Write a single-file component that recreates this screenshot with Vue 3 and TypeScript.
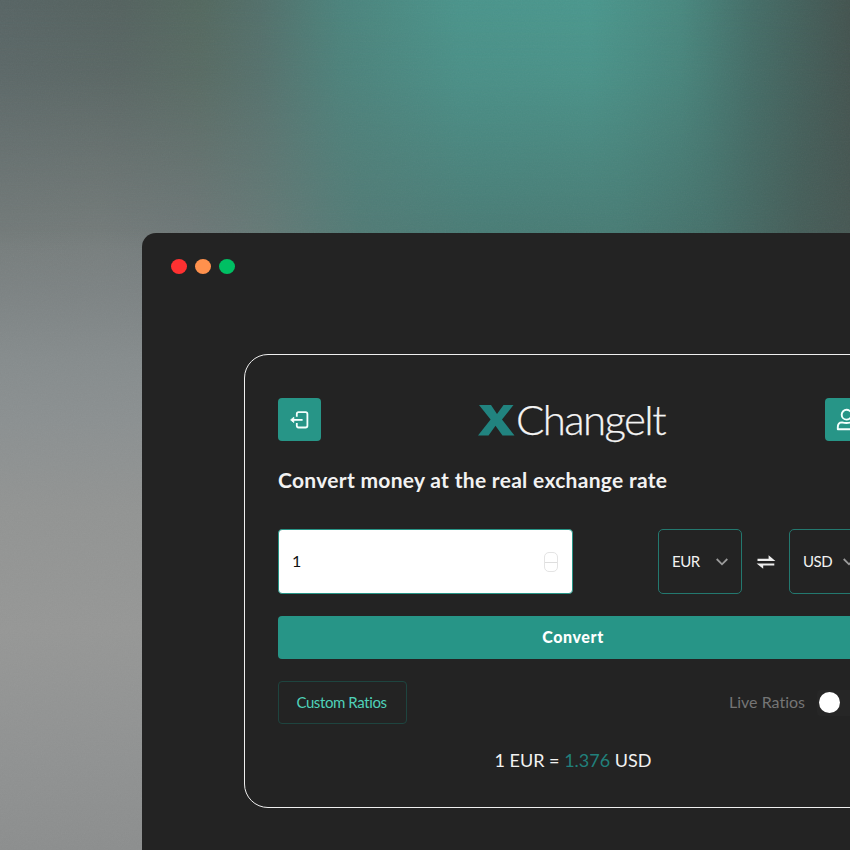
<script setup lang="ts">
import { ref, computed } from 'vue'

const amount = ref(1)
const source = ref('EUR')
const target = ref('USD')
const rate = ref(1.376)
const result = computed(() => (amount.value * rate.value).toFixed(3))

function swap(): void {
  const previous = source.value
  source.value = target.value
  target.value = previous
  rate.value = 1 / rate.value
}
</script>

<template>
  <main class="stage">
    <svg class="grain" aria-hidden="true">
      <filter id="grain">
        <feTurbulence type="fractalNoise" baseFrequency="0.75" numOctaves="2" seed="4" />
        <feColorMatrix type="saturate" values="0" />
      </filter>
      <rect width="100%" height="100%" filter="url(#grain)" />
    </svg>
    <div class="window">
      <div class="titlebar">
        <span class="dot red"></span>
        <span class="dot orange"></span>
        <span class="dot green"></span>
      </div>
      <section class="card">
        <header class="header">
          <button class="square">
            <svg width="20" height="20" viewBox="0 0 20 20" fill="none" stroke="#f4fffd" stroke-width="1.8" stroke-linejoin="round">
              <path d="M6.8 6.8V3.9Q6.8 2.2 8.5 2.2H15.6Q17.4 2.2 17.4 4V15.8Q17.4 17.5 15.6 17.5H8.5Q6.8 17.5 6.8 15.8V13" />
              <path d="M3.5 9.9H12.6" />
              <path d="M.6 9.9L3.8 7.2V12.6Z" fill="#fff" stroke-width=".8" />
            </svg>
          </button>
          <h1 class="logo">
            <svg width="37" height="31" viewBox="0 0 37 31">
              <path d="M1 0H13L19 8.9L25.5 0H35.5L24 14.5L36.5 30.5H24.5L17.5 20.7L10.5 30.5H0L12.6 14.5Z" fill="#21837f" />
            </svg>
            <span class="name">ChangeIt</span>
          </h1>
          <button class="square">
            <svg width="20" height="24" viewBox="0 0 20 24" fill="none" stroke="#f4fffd" stroke-width="1.9" stroke-linejoin="round">
              <circle cx="10.6" cy="6.7" r="4.9" />
              <path d="M1.8 21.2V19.2Q1.8 14.4 6 14.4Q10.5 15.6 15 14.4Q19.2 14.4 19.2 19.2V21.2Z" />
            </svg>
          </button>
        </header>

        <h2 class="heading">Convert money at the real exchange rate</h2>

        <div class="fields">
          <div class="amount">
            <span class="value">{{ amount }}</span>
            <span class="stepper"><i></i><i></i></span>
          </div>
          <div class="pair">
            <div class="select">
              <span>{{ source }}</span>
              <svg width="12" height="8" viewBox="0 0 12 8" fill="none" stroke="#9b9b9b" stroke-width="1.8"><path d="M.7 1L6 6.3L11.3 1" /></svg>
            </div>
            <button class="swap" @click="swap">
              <svg width="20" height="14" viewBox="0 0 20 14" fill="#eee">
                <path d="M1.5 3.7H12.6V.3L19.4 5.9H1.5Z" />
                <path d="M18.3 8.4H.6L7.2 13.8V10.5H18.3Z" />
              </svg>
            </button>
            <div class="select second">
              <span>{{ target }}</span>
              <svg width="12" height="8" viewBox="0 0 12 8" fill="none" stroke="#9b9b9b" stroke-width="1.8"><path d="M.7 1L6 6.3L11.3 1" /></svg>
            </div>
          </div>
        </div>

        <button class="convert"><span>Convert</span></button>

        <div class="options">
          <button class="custom"><span>Custom Ratios</span></button>
          <label class="live"><span>Live Ratios</span><i class="toggle"></i></label>
        </div>

        <p class="result">{{ amount }} {{ source }} = <b>{{ result }}</b> {{ target }}</p>
      </section>
    </div>
  </main>
</template>

<style>
body {
  margin: 0;
  overflow: hidden;
}
</style>

<style scoped>
* {
  box-sizing: border-box;
}
.stage {
  position: relative;
  width: 850px;
  height: 850px;
  padding: 233px 0 0 142px;
  overflow: hidden;
  font-family: 'Gill Sans', 'Gill Sans MT', Lato, 'Liberation Sans', sans-serif;
  font-variant-ligatures: none;
  color: #f2f2f2;
  background: linear-gradient(90deg, #757c7b 0, #767d7c 100px, #70797a 190px, #667a77 265px, #527a75 360px, #497a74 480px, #487a73 620px, #46706a 710px, #465e59 800px, #475854 850px);
}
/* brighter band along the top edge, fading down to the window */
.stage::before {
  content: '';
  position: absolute;
  inset: 0 0 auto;
  height: 250px;
  background: linear-gradient(90deg, #576464 0, #54625f 120px, #53685f 200px, #526f6a 260px, #4b837c 340px, #4a948b 460px, #4a978d 590px, #48887f 680px, #446e68 750px, #43534f 850px);
  -webkit-mask-image: linear-gradient(#000 0, rgba(0, 0, 0, 0.82) 30%, rgba(0, 0, 0, 0.4) 65%, transparent 100%);
  mask-image: linear-gradient(#000 0, rgba(0, 0, 0, 0.82) 30%, rgba(0, 0, 0, 0.4) 65%, transparent 100%);
}
/* grey fade running down the left side */
.stage::after {
  content: '';
  position: absolute;
  inset: 230px auto 0 0;
  width: 156px;
  background: linear-gradient(rgba(124, 131, 131, 0) 0, rgba(126, 132, 133, 0.8) 60px, #868c8d 130px, #8b9091 190px, #929493 280px, #969796 400px, #909292 530px, #8c8e8e 620px);
}
.grain {
  position: absolute;
  z-index: 1;
  inset: 0;
  width: 100%;
  height: 100%;
  opacity: 0.05;
}
.window {
  position: relative;
  z-index: 2;
  width: 860px;
  height: 640px;
  background: #232323;
  border-radius: 14px 0 0 0;
}
.titlebar {
  display: flex;
  gap: 8px;
  height: 120.5px;
  padding: 26px 0 0 29px;
}
.dot {
  width: 16px;
  height: 15px;
  border-radius: 50%;
}
.red {
  background: #ff3131;
}
.orange {
  background: #ff914d;
}
.green {
  background: #00bf63;
}
.card {
  width: 658px;
  height: 454px;
  margin-left: 102px;
  padding: 43.5px 33px 0 33px;
  border: 1px solid #efefef;
  border-radius: 24px;
}
button {
  display: flex;
  align-items: center;
  justify-content: center;
  padding: 0;
  border: 0;
  font: inherit;
  color: inherit;
  background: none;
}
.header {
  display: flex;
  justify-content: space-between;
  height: 43px;
}
.square {
  width: 43px;
  height: 43px;
  border-radius: 4px;
  background: #279587;
}
.logo {
  display: flex;
  gap: 1px;
  margin: 0;
  padding: 7px 3px 0 0;
}
.name {
  margin-top: -16px;
  font-size: 42px;
  font-weight: 300;
  line-height: 60px;
  letter-spacing: -1.6px;
  color: #f4f4f4;
  -webkit-text-stroke: 0.25px #f4f4f4;
}
.heading {
  margin: 24px 0 0;
  font-size: 21px;
  font-weight: 700;
  line-height: 30px;
  letter-spacing: 0.3px;
  white-space: nowrap;
}
.fields {
  display: flex;
  justify-content: space-between;
  height: 65px;
  margin-top: 34px;
}
.amount {
  display: flex;
  align-items: center;
  justify-content: space-between;
  width: 295px;
  padding: 0 14px 0 13px;
  border: 1px solid #279587;
  border-radius: 4px;
  color: #111;
  background: #fff;
  font-size: 16px;
}
.value {
  padding-bottom: 2px;
}
.stepper {
  display: flex;
  flex-direction: column;
  width: 14px;
  height: 20px;
  margin-top: 1px;
  border: 1px solid #e4e4e4;
  border-radius: 5px;
}
.stepper i {
  flex: 1;
}
.stepper i + i {
  border-top: 1px solid #dedede;
}
.pair {
  display: flex;
}
.select {
  display: flex;
  align-items: center;
  justify-content: space-between;
  width: 84px;
  padding: 0 13px;
  border: 1px solid #23786f;
  border-radius: 5px;
  font-size: 15px;
  letter-spacing: -0.5px;
}
.select span {
  padding-bottom: 2px;
}
.second {
  width: 79px;
  padding-right: 12px;
}
.swap {
  width: 47px;
}
.convert {
  width: 100%;
  height: 43px;
  margin-top: 22px;
  border-radius: 4px;
  background: #279587;
  color: #fff;
  font-size: 16px;
  font-weight: 900;
  letter-spacing: 0.6px;
}
.options {
  display: flex;
  justify-content: space-between;
  height: 43px;
  margin-top: 22px;
}
.custom {
  width: 129px;
  padding-right: 2px;
  border: 1px solid #1e443f;
  border-radius: 4px;
  color: #4fd1b9;
  font-size: 15px;
  letter-spacing: -0.4px;
}
.convert span,
.custom span,
.live span {
  padding-bottom: 2px;
}
.live {
  display: flex;
  align-items: center;
  gap: 12px;
  color: #757575;
  font-size: 16px;
}
.toggle {
  display: flex;
  align-items: center;
  width: 51px;
  height: 26px;
  padding: 2px;
  border-radius: 4px;
  background: #262626;
}
.toggle::before {
  content: '';
  width: 21px;
  height: 21px;
  border-radius: 50%;
  background: #fff;
}
.result {
  margin: 23px 0 0;
  font-size: 18px;
  line-height: 26px;
  text-align: center;
}
.result b {
  color: #21807b;
  font-weight: 400;
}
</style>
